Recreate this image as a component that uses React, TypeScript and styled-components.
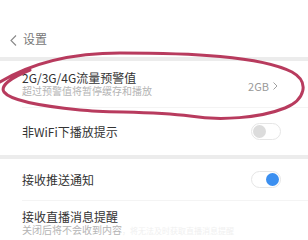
import styled, { createGlobalStyle } from "styled-components";

const Global = createGlobalStyle`
  html, body {
    margin: 0;
    padding: 0;
    background: #fff;
  }
  body {
    font-family: "Noto Sans CJK SC", "Noto Sans", sans-serif;
  }
`;

const Screen = styled.div`
  position: relative;
  width: 308px;
  height: 240px;
  overflow: hidden;
  background: #fff;
`;

const Header = styled.div`
  height: 57px;
  display: flex;
  align-items: flex-end;
  padding: 0 0 11px 10px;
  box-sizing: border-box;
  gap: 6px;
  color: #777;
  font-size: 12px;
  line-height: 14px;
`;

const Band = styled.div`
  height: 4px;
  background: #ececec;
`;

const Row = styled.div<{ $h: number }>`
  height: ${(p) => p.$h}px;
  display: flex;
  align-items: center;
  padding: 0 27px 0 22px;
  box-sizing: border-box;
`;

const Texts = styled.div`
  flex: 1;
  display: flex;
  flex-direction: column;
`;

const Title = styled.div`
  font-size: 12px;
  line-height: 14px;
  color: #333;
`;

const Sub = styled.div`
  font-size: 10px;
  line-height: 12px;
  color: #b4b4b4;
  white-space: nowrap;
`;

const Faint = styled.span`
  color: #f0f0f0;
  font-size: 8px;
`;

const Divider = styled.div`
  height: 1px;
  margin-left: 22px;
  background: #f4f4f4;
`;

const Value = styled.div`
  display: flex;
  align-items: center;
  gap: 4px;
  font-size: 11px;
  color: #9a9a9a;
  margin-right: 3px;
  padding-top: 4px;
`;

const Track = styled.div<{ $on?: boolean }>`
  width: 26px;
  height: 15px;
  border: 1px solid #e6e6e6;
  border-radius: 9px;
  background: #fff;
  display: flex;
  align-items: center;
  justify-content: ${(p) => (p.$on ? "flex-end" : "flex-start")};
  padding: 0 1px;
  box-sizing: content-box;
`;

const Knob = styled.div<{ $on?: boolean }>`
  width: 13px;
  height: 13px;
  border-radius: 50%;
  background: ${(p) => (p.$on ? "#3b8ff0" : "#dcdcdc")};
`;

const Ink = styled.svg`
  position: absolute;
  left: 0;
  top: 0;
  pointer-events: none;
`;

const Back = () => (
  <svg width="7" height="11" viewBox="0 0 7 11">
    <polyline points="6,0.5 1,5.5 6,10.5" fill="none" stroke="#888" strokeWidth="1.1" />
  </svg>
);

const Chevron = () => (
  <svg width="5" height="8" viewBox="0 0 5 8">
    <polyline points="0.5,0.5 4,4 0.5,7.5" fill="none" stroke="#a0a0a0" strokeWidth="1" />
  </svg>
);

const Toggle = ({ on }: { on?: boolean }) => (
  <Track $on={on}>
    <Knob $on={on} />
  </Track>
);

export default function App() {
  return (
    <Screen>
      <Global />
      <Header>
        <Back />
        <span>设置</span>
      </Header>
      <Band />
      <Row $h={46}>
        <Texts>
          <Title>2G/3G/4G流量预警值</Title>
          <Sub>超过预警值将暂停缓存和播放</Sub>
        </Texts>
        <Value>
          2GB <Chevron />
        </Value>
      </Row>
      <Divider />
      <Row $h={47}>
        <Texts>
          <Title>非WiFi下播放提示</Title>
        </Texts>
        <Toggle />
      </Row>
      <Band />
      <Row $h={41}>
        <Texts>
          <Title>接收推送通知</Title>
        </Texts>
        <Toggle on />
      </Row>
      <Divider />
      <Row $h={44}>
        <Texts>
          <Title>接收直播消息提醒</Title>
          <Sub>
            关闭后将不会收到内容<Faint>，将无法及时获取直播消息提醒</Faint>
          </Sub>
        </Texts>
      </Row>
      <Ink width="308" height="240" viewBox="0 0 308 240">
        <path
          d="M 0 82 C 30 64, 70 53, 120 53 C 190 53, 260 56, 292 72 C 310 82, 305 100, 285 108 C 260 118, 220 121, 190 116 C 150 111, 110 113, 80 110 C 40 106, 10 100, 4 92 C 0 86, 10 78, 30 70"
          fill="none"
          stroke="#b22a50"
          strokeWidth="3"
          strokeLinecap="round"
          opacity="0.92"
        />
      </Ink>
    </Screen>
  );
}
